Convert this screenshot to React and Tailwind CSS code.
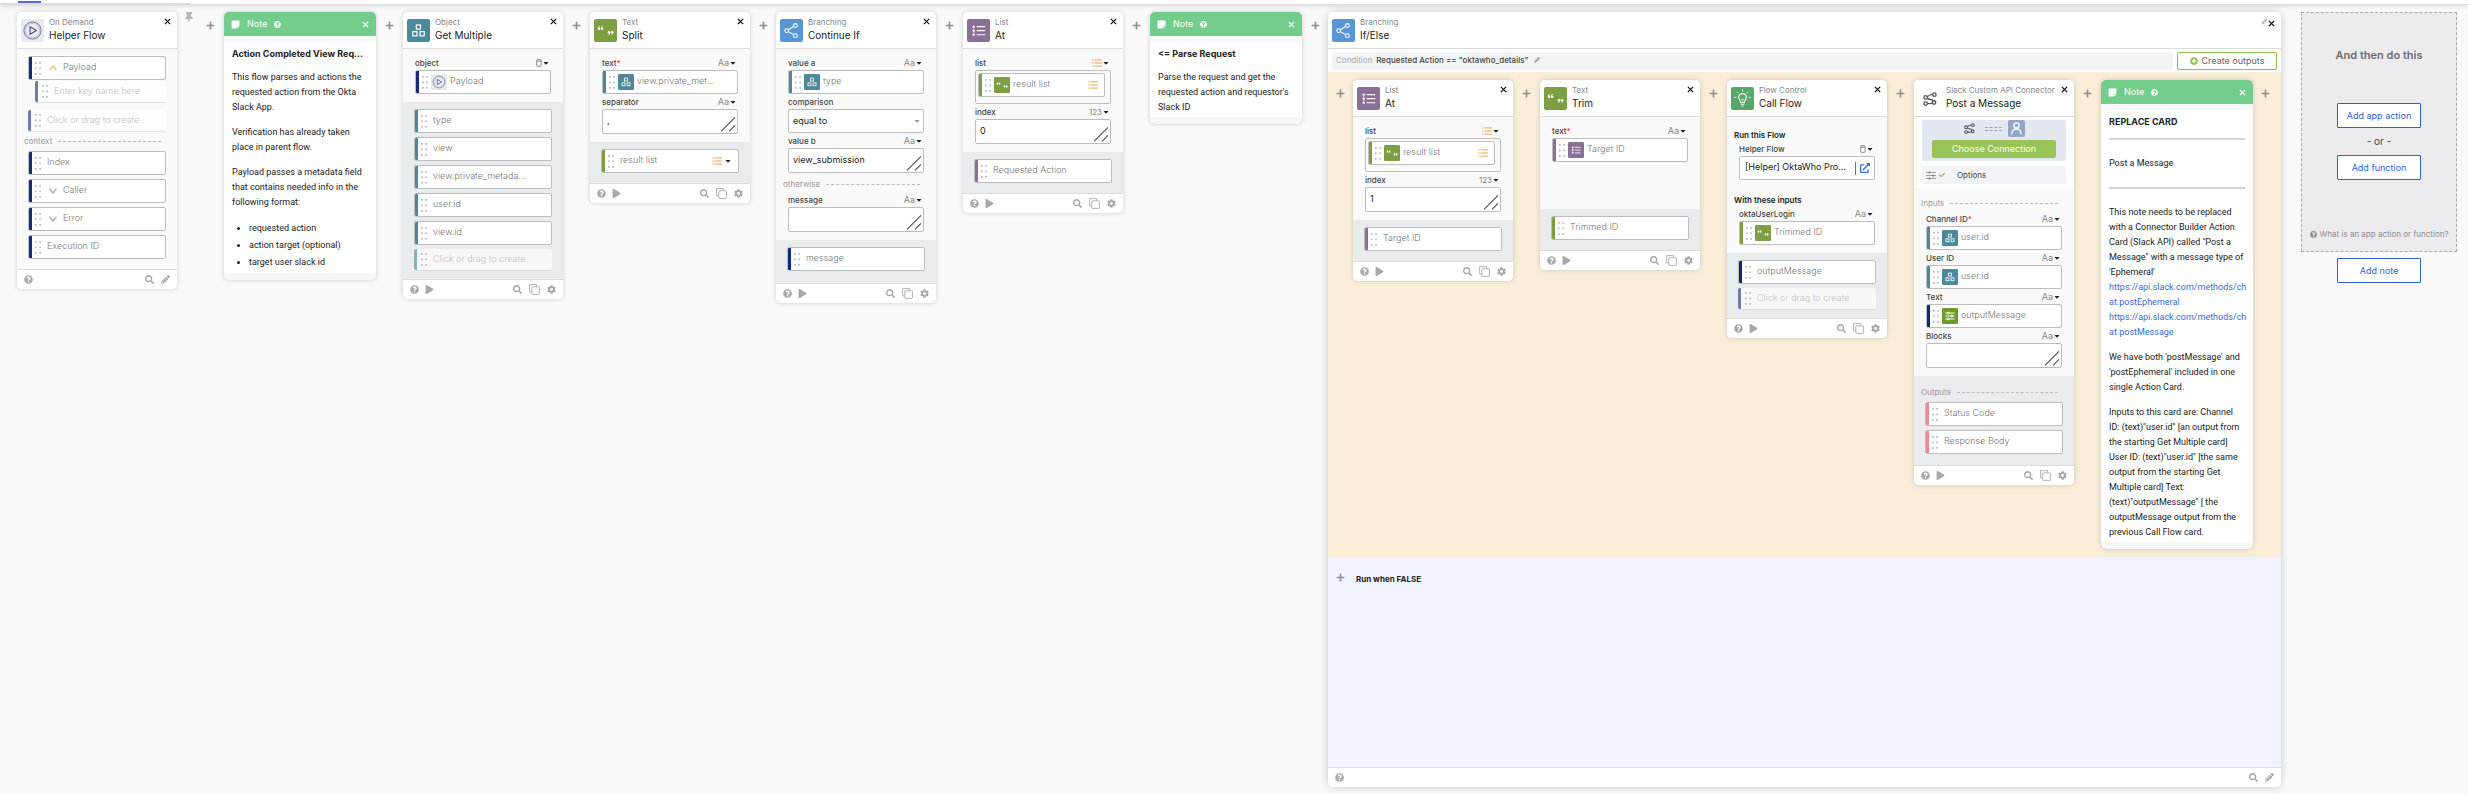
import React, { useId } from "react";
import {
  FaQuestionCircle,
  FaPlay,
  FaSearch,
  FaCog,
  FaPencilAlt,
  FaPlus,
  FaThumbtack,
  FaStickyNote,
  FaCompressAlt,
  FaCheck,
  FaPlusCircle,
  FaCaretDown,
  FaExternalLinkAlt,
} from "react-icons/fa";

/* ---------- icons ---------- */

const CloseIcon = ({ className }) => (
  <svg viewBox="0 0 8 8" className={className} fill="none" stroke="currentColor" strokeWidth="1.5">
    <path d="M1 1L7 7M7 1L1 7" />
  </svg>
);

const PlayRing = () => (
  <svg viewBox="0 0 24 24" className="size-full" fill="none" stroke="#5560a8">
    <rect width="24" height="24" rx="2" fill="#eaeaea" stroke="none" />
    <circle cx="12" cy="12" r="9" strokeWidth="0.9" />
    <circle cx="12" cy="12" r="7.6" strokeWidth="0.3" />
    <path d="M9.4 8L16 12L9.4 16Z" stroke="#3a4694" strokeWidth="1.1" strokeLinejoin="round" />
  </svg>
);

const ObjectIcon = () => (
  <svg viewBox="0 0 24 24" className="size-full" fill="none" stroke="#fff" strokeWidth="1.2">
    <rect width="24" height="24" rx="2" fill="#4b8a9b" stroke="none" />
    <rect x="9.7" y="6.2" width="4.4" height="4.4" />
    <rect x="6" y="13.2" width="4.4" height="4.4" />
    <rect x="13.6" y="13.2" width="4.4" height="4.4" />
  </svg>
);

const QuotesIcon = () => (
  <svg viewBox="0 0 24 24" className="size-full" fill="#fff">
    <rect width="24" height="24" rx="2" fill="#7c9f43" />
    <circle cx="5.3" cy="10.2" r="1.3" />
    <circle cx="8.5" cy="10.2" r="1.3" />
    <path d="M4.4 10.2Q4.4 7.8 6.2 7.4M7.6 10.2Q7.6 7.8 9.4 7.4" fill="none" stroke="#fff" strokeWidth="0.8" />
    <circle cx="15.7" cy="13.8" r="1.3" />
    <circle cx="18.9" cy="13.8" r="1.3" />
    <path d="M16.6 13.8Q16.6 16.2 14.8 16.6M19.8 13.8Q19.8 16.2 18 16.6" fill="none" stroke="#fff" strokeWidth="0.8" />
  </svg>
);

const BranchIcon = () => (
  <svg viewBox="0 0 24 24" className="size-full" fill="none" stroke="#fff" strokeWidth="1.1">
    <rect width="24" height="24" rx="2" fill="#5b96d4" stroke="none" />
    <circle cx="7" cy="12.2" r="2" />
    <circle cx="16" cy="6.8" r="2" />
    <circle cx="16" cy="17.4" r="2" />
    <path d="M8.8 11.2L14.2 7.9M8.8 13.2L14.2 16.3" />
  </svg>
);

const ListTile = () => (
  <svg viewBox="0 0 24 24" className="size-full" fill="none" stroke="#fff" strokeWidth="1.2">
    <rect width="24" height="24" rx="2" fill="#8a7095" stroke="none" />
    <path d="M10 8H19M10 12.2H19M10 16.4H19" />
    <path d="M7 7V17.4" strokeWidth="0.7" />
    <path d="M5.8 8H8.2M5.8 12.2H8.2M5.8 16.4H8.2" strokeWidth="1.7" />
  </svg>
);

const BulbIcon = () => (
  <svg viewBox="0 0 24 24" className="size-full" fill="none" stroke="#fff" strokeWidth="1.1" strokeLinecap="round">
    <rect width="24" height="24" rx="2" fill="#57a868" stroke="none" />
    <path d="M10.2 16.2C10.2 14.2 8 13.4 8 10.9A4 4 0 0 1 16 10.9C16 13.4 13.8 14.2 13.8 16.2Z" />
    <path d="M10.4 18H13.6M11.2 19.8H12.8M11 12.6L12 14L13 12.6" strokeWidth="0.9" />
    <path d="M12 3V4.4M6.4 5.2L7.3 6.2M17.6 5.2L16.7 6.2M3.8 10.8H5.2M18.8 10.8H20.2" strokeWidth="0.9" />
  </svg>
);

const SlidersTile = () => (
  <svg viewBox="0 0 24 24" className="size-full" fill="#6f9a2d" stroke="#fff" strokeWidth="1.5">
    <rect width="24" height="24" rx="2" stroke="none" />
    <path d="M5 7.6H19M5 12H19M5 16.4H19" />
    <circle cx="9.6" cy="7.6" r="1.4" />
    <circle cx="14.6" cy="12" r="1.4" />
    <circle cx="9.6" cy="16.4" r="1.4" />
  </svg>
);

const NodesIcon = ({ className }) => (
  <svg viewBox="0 0 16 16" className={className} fill="none" stroke="#555" strokeWidth="1.5">
    <circle cx="3" cy="6.2" r="2" />
    <circle cx="13" cy="3" r="2" />
    <circle cx="3" cy="13.2" r="2" />
    <circle cx="12.6" cy="12" r="2" />
    <path d="M4.8 5.4Q8 3 11 2.8M4.8 7Q7 8.6 9 8.6Q11 8.8 11.6 10.2M4.9 13Q8 13.6 10.8 12.8" />
  </svg>
);

const SlidersIcon = ({ className }) => (
  <svg viewBox="0 0 10 9" className={className} fill="#888" stroke="#888" strokeWidth="0.8">
    <path d="M0 1.5H10M0 4.5H10M0 7.5H10" />
    <path d="M3.4 0.3V2.7M7 3.3V5.7M3.4 6.3V8.7" strokeWidth="1.3" />
  </svg>
);

const PersonTile = ({ className }) => (
  <svg viewBox="0 0 17 17" className={className} fill="none" stroke="#fff" strokeWidth="1.3" strokeLinecap="round">
    <rect width="17" height="17" rx="2" fill="#93a6c8" stroke="none" />
    <circle cx="8.5" cy="5.4" r="2.6" />
    <path d="M3.8 14C4 10.6 6 9 8.5 9S13 10.6 13.2 14" />
  </svg>
);

const ListIcon = () => (
  <svg viewBox="0 0 10 8" className="h-2 w-2.5" fill="none" stroke="#f0a742" strokeWidth="1">
    <path d="M2.5 0.9H10M2.5 4H10M2.5 7.1H10M0.2 0.9H1.5M0.2 4H1.5M0.2 7.1H1.5" />
  </svg>
);

const RecordIcon = () => (
  <svg viewBox="0 0 6 8" className="h-2 w-1.5" fill="none" stroke="#777" strokeWidth="0.8">
    <rect x="0.7" y="0.6" width="4.4" height="6.8" rx="1" />
    <path d="M0.7 2.2H5.1" />
  </svg>
);

const CopyIcon = () => (
  <svg viewBox="0 0 11 11" className="size-[11px]" fill="none" stroke="#aaa" strokeWidth="0.9">
    <path d="M2.6 8H0.6V0.6H7.6V2.6" />
    <rect x="2.8" y="2.8" width="7.6" height="7.6" rx="0.6" />
  </svg>
);

const Grip = () => (
  <svg viewBox="0 0 6 13" className="h-[13px] w-1.5 shrink-0" fill="#bbb">
    <path d="M0 0h1.7v1.7H0zM4.2 0h1.7v1.7H4.2zM0 5.5h1.7v1.7H0zM4.2 5.5h1.7v1.7H4.2zM0 11h1.7v1.7H0zM4.2 11h1.7v1.7H4.2z" />
  </svg>
);

const Chevron = ({ up }) => (
  <svg
    viewBox="0 0 8 6"
    className={up ? "h-1.5 w-2 shrink-0 text-[#f3bd6c]" : "h-1.5 w-2 shrink-0 text-[#aaa]"}
    fill="none"
    stroke="currentColor"
    strokeWidth="1.4"
  >
    <path d={up ? "M0.6 5.4L4 1L7.4 5.4" : "M0.6 0.6L4 5L7.4 0.6"} />
  </svg>
);

const TILES = {
  play: PlayRing,
  object: ObjectIcon,
  quotes: QuotesIcon,
  branch: BranchIcon,
  list: ListTile,
  bulb: BulbIcon,
  sliders: SlidersTile,
};

const BARS = {
  navy: "bg-[#15297c]",
  navyFaint: "bg-[#6d7db0]",
  teal: "bg-[#4b8a9b]",
  tealFaint: "bg-[#86b1bb]",
  olive: "bg-[#7c9f43]",
  purple: "bg-[#8a7095]",
  red: "bg-[#e98d8d]",
};

/* ---------- building blocks ---------- */

function Pill({ id, bar, icon, chevron, children, end, listed }) {
  const Tile = TILES[icon];
  return (
    <button
      id={id}
      type="button"
      className="flex h-6 w-full items-center overflow-hidden rounded-[2px] border border-[#bdbdbd] bg-white text-left text-[9px] font-light text-[#777]"
    >
      <span className={`h-full w-[3px] shrink-0 ${BARS[bar]}`} />
      <span className="flex min-w-0 flex-1 items-center pl-[3px]">
        <Grip />
        {chevron && (
          <span className="ml-2 flex">
            <Chevron up={chevron === "up"} />
          </span>
        )}
        {Tile && (
          <span className="ml-[3px] size-4 shrink-0">
            <Tile />
          </span>
        )}
        <span className={Tile ? "ml-[3px] truncate pb-0.5" : "ml-1.5 truncate pb-0.5"}>{children}</span>
      </span>
      {end && (
        <span className="flex shrink-0 items-center gap-0.5 pr-1.5">
          <ListIcon />
          {!listed && <FaCaretDown className="size-2 text-[#222]" />}
        </span>
      )}
    </button>
  );
}

function Ghost({ bar, text, indent }) {
  return (
    <div className={indent ? "ml-[7px] flex h-[22px] items-center rounded-[2px] border-b border-[#ddd] bg-white/60" : "flex h-[22px] items-center rounded-[2px] border-b border-[#ddd] bg-white/60"}>
      <span className={`h-full w-[3px] shrink-0 rounded-l-[2px] ${BARS[bar]}`} />
      <span className="flex min-w-0 flex-1 items-center gap-1.5 pl-1">
        <Grip />
        <input
          aria-label={text}
          placeholder={text}
          className="min-w-0 flex-1 bg-transparent pb-0.5 text-[9px] font-light placeholder:text-[#c2c2c2] focus:outline-none"
        />
      </span>
    </div>
  );
}

const TYPES = {
  text: <span className="text-[9px] text-[#888]">Aa</span>,
  number: <span className="text-[8px] text-[#888]">123</span>,
  list: <ListIcon />,
  record: <RecordIcon />,
};

function Field({ label, type, required, children }) {
  const id = useId();
  return (
    <div>
      <div className="flex h-[15px] items-center justify-between pr-px">
        <label htmlFor={id} className="text-[8px] font-medium text-[#444]">
          {label}
          {required && <span className="text-[#e0403c]">*</span>}
        </label>
        {type && (
          <button type="button" aria-label={`${label} type`} className="flex items-center">
            {TYPES[type]}
            <FaCaretDown className="size-2 text-[#222]" />
          </button>
        )}
      </div>
      {children(id)}
    </div>
  );
}

function TextBox({ id, value = "" }) {
  return (
    <div className="relative h-[25px]">
      <textarea
        id={id}
        defaultValue={value}
        className="block h-full w-full resize-none overflow-hidden rounded-[2px] border border-[#bdbdbd] bg-white px-1 pt-1 text-[9px] leading-[14px] text-[#222]"
      />
      <svg viewBox="0 0 16 16" className="pointer-events-none absolute right-0.5 bottom-0.5 size-4" fill="none" stroke="#555" strokeWidth="1.2">
        <path d="M1 15.4L15 1.4M9 15.4L15 9.4" />
      </svg>
    </div>
  );
}

function Divider({ children }) {
  return (
    <div className="flex h-4 items-center gap-1.5 pr-4 pl-[7px] text-[8px] text-[#999]">
      <span>{children}</span>
      <span className="flex-1 border-t border-dashed border-[#bbb]" />
    </div>
  );
}

const Inputs = ({ children, className = "pt-1.5" }) => (
  <div className={`bg-[#f9f9f9] pb-2 ${className}`}>{children}</div>
);
const Fields = ({ children }) => <div className="px-3">{children}</div>;

const Outputs = ({ children, className = "pt-[7px] pb-2.5" }) => (
  <div className={`bg-[#eaebed] ${className}`}>{children}</div>
);
const Pills = ({ children }) => <div className="flex flex-col gap-1 px-[11px]">{children}</div>;

function IconButton({ label, children }) {
  return (
    <button type="button" aria-label={label} className="flex items-center justify-center">
      {children}
    </button>
  );
}

function Footer({ editable }) {
  return (
    <footer className="flex h-5 shrink-0 items-center justify-between rounded-b-[5px] border-t border-[#dcdcdc] bg-white px-[7px] text-[#a8a8a8]">
      <div className="flex items-center gap-1.5">
        <IconButton label="Help">
          <FaQuestionCircle className="size-[9px]" />
        </IconButton>
        {!editable && (
          <IconButton label="Run">
            <FaPlay className="size-[9px]" />
          </IconButton>
        )}
      </div>
      <div className="flex items-center gap-[7px]">
        <IconButton label="Search">
          <FaSearch className="size-[9px]" />
        </IconButton>
        {editable ? (
          <IconButton label="Edit">
            <FaPencilAlt className="size-[9px]" />
          </IconButton>
        ) : (
          <>
            <IconButton label="Duplicate">
              <CopyIcon />
            </IconButton>
            <IconButton label="Settings">
              <FaCog className="size-[9px]" />
            </IconButton>
          </>
        )}
      </div>
    </footer>
  );
}

function CardHeader({ icon, connector, kind, title, collapsible }) {
  const Tile = TILES[icon];
  return (
    <header className="flex h-[37px] shrink-0 items-start rounded-t-[5px] border-b border-[#dcdcdc] bg-white pt-1 pr-1.5 pl-1">
      {Tile ? (
        <span className="mt-[3px] size-[23px] shrink-0">
          <Tile />
        </span>
      ) : (
        <span className="flex h-[30px] w-6 shrink-0 items-center justify-center">
          <NodesIcon className="size-3.5" />
        </span>
      )}
      <div className={connector ? "ml-1 min-w-0 flex-1" : "ml-[5px] min-w-0 flex-1"}>
        <p className="text-[8px] leading-3 whitespace-nowrap text-[#888]">{kind}</p>
        <h2 className="text-[10px] leading-[14px] whitespace-nowrap text-[#222]">{title}</h2>
      </div>
      <div className="flex items-center pt-0.5">
        {collapsible && (
          <IconButton label="Collapse">
            <FaCompressAlt className="mb-1 size-[7px] text-[#999]" />
          </IconButton>
        )}
        <IconButton label={`Close ${title}`}>
          <CloseIcon className="size-[7px] text-[#111]" />
        </IconButton>
      </div>
    </header>
  );
}

function Card({ children, editable, ...head }) {
  return (
    <section className="w-[160px] shrink-0 rounded-[5px] bg-white shadow-[0_0_5px_rgba(0,0,0,0.18)]">
      <CardHeader {...head} />
      {children}
      <Footer editable={editable} />
    </section>
  );
}

function Note({ title, children }) {
  return (
    <section className="w-[152px] shrink-0 rounded-[5px] bg-[#f7f7f7] pb-[7px] shadow-[0_0_5px_rgba(0,0,0,0.18)]">
      <header className="flex h-6 items-center rounded-t-[5px] bg-[#72cc8b] px-[7px] text-white">
        <FaStickyNote className="size-[9px]" />
        <span className="ml-[7px] text-[9px]">Note</span>
        <FaQuestionCircle className="ml-[7px] size-[7px]" />
        <button type="button" aria-label="Close note" className="ml-auto">
          <CloseIcon className="size-[7px]" />
        </button>
      </header>
      <div className="mt-1.5 bg-white px-2 pt-1 pb-0.5 text-[#222]">
        <h3 className="text-[9px] leading-4 font-bold whitespace-nowrap">{title}</h3>
        <div className="flex flex-col gap-2.5 pt-2 font-[Roboto,sans-serif] text-[9px] leading-[15px] whitespace-pre">
          {children}
        </div>
      </div>
    </section>
  );
}

function Plus({ className = "w-[27px]" }) {
  return (
    <div className={`flex h-[27px] shrink-0 items-center justify-center ${className}`}>
      <button type="button" aria-label="Add step here">
        <FaPlus className="size-[9px] text-[#8f8f8f]" />
      </button>
    </div>
  );
}

const OutlineButton = ({ children }) => (
  <button type="button" className="h-[25px] w-[84px] rounded-[1px] border border-[#2f62d9] bg-white text-[9px] text-[#2f62d9]">
    {children}
  </button>
);

/* ---------- cards ---------- */

const ListAt = ({ index, output }) => (
  <Card icon="list" kind="List" title="At">
    <Inputs>
      <Fields>
        <Field label="list" type="list">
          {(id) => (
            <div className="h-[34px] rounded-[2px] border border-[#bdbdbd] bg-[#f9f9f9] pt-0.5 pr-[5px] pl-0.5">
              <Pill id={id} bar="olive" icon="quotes" end listed>
                result list
              </Pill>
            </div>
          )}
        </Field>
        <Field label="index" type="number">
          {(id) => <TextBox id={id} value={index} />}
        </Field>
      </Fields>
    </Inputs>
    <Outputs>
      <Pills>
        <Pill bar="purple">{output}</Pill>
      </Pills>
    </Outputs>
  </Card>
);

const HelperFlow = () => (
  <Card icon="play" kind="On Demand" title="Helper Flow" editable>
    <div className="bg-[#f9f9f9] pt-[7px] pb-2.5">
      <div className="px-[11px]">
        <Pill bar="navy" chevron="up">
          Payload
        </Pill>
        <div className="pt-px">
          <Ghost bar="navyFaint" text="Enter key name here" indent />
        </div>
        <div className="pt-[7px]">
          <Ghost bar="navyFaint" text="Click or drag to create" />
        </div>
      </div>
      <div className="pt-px pb-0.5">
        <Divider>context</Divider>
      </div>
      <Pills>
        <Pill bar="navy">Index</Pill>
        <Pill bar="navy" chevron="down">
          Caller
        </Pill>
        <Pill bar="navy" chevron="down">
          Error
        </Pill>
        <Pill bar="navy">Execution ID</Pill>
      </Pills>
    </div>
  </Card>
);

const GetMultiple = () => (
  <Card icon="object" kind="Object" title="Get Multiple">
    <Inputs>
      <Fields>
        <Field label="object" type="record">
          {(id) => (
            <Pill id={id} bar="navy" icon="play">
              Payload
            </Pill>
          )}
        </Field>
      </Fields>
    </Inputs>
    <Outputs className="pt-[7px] pb-2">
      <Pills>
        {["type", "view", "view.private_metada...", "user.id", "view.id"].map((name) => (
          <Pill key={name} bar="teal">
            {name}
          </Pill>
        ))}
        <Ghost bar="tealFaint" text="Click or drag to create" />
      </Pills>
    </Outputs>
  </Card>
);

const Split = () => (
  <Card icon="quotes" kind="Text" title="Split">
    <Inputs>
      <Fields>
        <Field label="text" type="text" required>
          {(id) => (
            <Pill id={id} bar="teal" icon="object">
              view.private_met...
            </Pill>
          )}
        </Field>
        <Field label="separator" type="text">
          {(id) => <TextBox id={id} value="," />}
        </Field>
      </Fields>
    </Inputs>
    <Outputs>
      <Pills>
        <Pill bar="olive" end>
          result list
        </Pill>
      </Pills>
    </Outputs>
  </Card>
);

const ContinueIf = () => (
  <Card icon="branch" kind="Branching" title="Continue If">
    <Inputs>
      <Fields>
        <Field label="value a" type="text">
          {(id) => (
            <Pill id={id} bar="teal" icon="object">
              type
            </Pill>
          )}
        </Field>
        <Field label="comparison">
          {(id) => (
            <div className="relative h-6">
              <select
                id={id}
                className="block h-full w-full appearance-none rounded-[2px] border border-[#bdbdbd] bg-white px-1 text-[9px] leading-[14px] text-[#222]"
              >
                <option>equal to</option>
              </select>
              <FaCaretDown className="pointer-events-none absolute top-2 right-[3px] size-2 text-[#999]" />
            </div>
          )}
        </Field>
        <Field label="value b" type="text">
          {(id) => <TextBox id={id} value="view_submission" />}
        </Field>
      </Fields>
      <div className="pt-[3px]">
        <Divider>otherwise</Divider>
      </div>
      <Fields>
        <Field label="message" type="text">
          {(id) => <TextBox id={id} />}
        </Field>
      </Fields>
    </Inputs>
    <Outputs className="pt-[7px] pb-3">
      <Pills>
        <Pill bar="navy">message</Pill>
      </Pills>
    </Outputs>
  </Card>
);

const Trim = () => (
  <Card icon="quotes" kind="Text" title="Trim">
    <Inputs className="min-h-[92px] pt-1.5">
      <Fields>
        <Field label="text" type="text" required>
          {(id) => (
            <Pill id={id} bar="purple" icon="list">
              Target ID
            </Pill>
          )}
        </Field>
      </Fields>
    </Inputs>
    <Outputs>
      <Pills>
        <Pill bar="olive">Trimmed ID</Pill>
      </Pills>
    </Outputs>
  </Card>
);

const CallFlow = () => (
  <Card icon="bulb" kind="Flow Control" title="Call Flow">
    <Inputs>
      <h3 className="px-[7px] pt-1.5 text-[8px] leading-3 font-semibold text-[#222]">Run this Flow</h3>
      <Fields>
        <Field label="Helper Flow" type="record">
          {(id) => (
            <div className="flex h-6 items-center rounded-[2px] border border-[#bdbdbd] bg-white pr-1 pl-[5px]">
              <button id={id} type="button" className="min-w-0 flex-1 pb-0.5 text-left text-[9px] whitespace-nowrap text-[#222]">
                [Helper] OktaWho Pro...
              </button>
              <a href="#helper-flow" aria-label="Open helper flow" className="flex h-[13px] items-center border-l border-[#777] pl-1">
                <FaExternalLinkAlt className="size-2.5 text-[#3b6fe0]" />
              </a>
            </div>
          )}
        </Field>
      </Fields>
      <h3 className="px-[7px] pt-3.5 text-[8px] leading-3 font-semibold text-[#222]">With these inputs</h3>
      <Fields>
        <Field label="oktaUserLogin" type="text">
          {(id) => (
            <Pill id={id} bar="olive" icon="quotes">
              Trimmed ID
            </Pill>
          )}
        </Field>
      </Fields>
    </Inputs>
    <Outputs className="pt-[7px] pb-2">
      <Pills>
        <Pill bar="navy">outputMessage</Pill>
        <Ghost bar="navyFaint" text="Click or drag to create" />
      </Pills>
    </Outputs>
  </Card>
);

const PostMessage = () => (
  <Card connector kind="Slack Custom API Connector" title="Post a Message">
    <div className="flex flex-col gap-[5px] px-2 pt-[3px] pb-[3px]">
      <div className="rounded-[2px] bg-[#e4e7ef] px-2.5 pb-[3px]">
        <div className="flex h-5 items-start justify-center gap-2.5">
          <NodesIcon className="mt-[3px] size-[11px]" />
          <span className="mt-[7px] h-1 w-[17px] border-y border-dashed border-[#93a6c8]" />
          <PersonTile className="-ml-1 size-[17px]" />
        </div>
        <button type="button" className="block h-[18px] w-full rounded-[2px] bg-[#97c455] text-[9px] text-white">
          Choose Connection
        </button>
      </div>
      <button type="button" className="flex h-[18px] items-center rounded-[2px] bg-[#f2f3f7] px-1 text-[8px] text-[#444]">
        <SlidersIcon className="h-[9px] w-2.5" />
        <FaCheck className="ml-[3px] size-1.5 text-[#8bc34a]" />
        <span className="ml-3">Options</span>
      </button>
    </div>
    <Inputs className="pt-2">
      <Divider>Inputs</Divider>
      <Fields>
        <Field label="Channel ID" type="text" required>
          {(id) => (
            <Pill id={id} bar="teal" icon="object">
              user.id
            </Pill>
          )}
        </Field>
        <Field label="User ID" type="text">
          {(id) => (
            <Pill id={id} bar="teal" icon="object">
              user.id
            </Pill>
          )}
        </Field>
        <Field label="Text" type="text">
          {(id) => (
            <Pill id={id} bar="navy" icon="sliders">
              outputMessage
            </Pill>
          )}
        </Field>
        <Field label="Blocks" type="text">
          {(id) => <TextBox id={id} />}
        </Field>
      </Fields>
    </Inputs>
    <Outputs className="pt-2 pb-[11px]">
      <div className="pb-0.5">
        <Divider>Outputs</Divider>
      </div>
      <Pills>
        <Pill bar="red">Status Code</Pill>
        <Pill bar="red">Response Body</Pill>
      </Pills>
    </Outputs>
  </Card>
);

const link = "text-[#3b6ad6]";

const IfElse = () => (
  <section className="flex min-w-0 flex-1 flex-col rounded-[5px] bg-white shadow-[0_0_8px_rgba(0,0,0,0.2)]">
    <CardHeader icon="branch" kind="Branching" title="If/Else" collapsible />
    <div className="flex gap-1 px-1 pt-[3px] pb-0.5">
      <div className="flex h-[18px] flex-1 items-center rounded-[2px] bg-[#f2f3f7] px-1 pb-0.5 text-[8px]">
        <span className="text-[#aaa]">Condition</span>
        <span className="ml-1 font-medium text-[#444]">Requested Action == "oktawho_details"</span>
        <button type="button" aria-label="Edit condition" className="ml-1.5">
          <FaPencilAlt className="size-1.5 text-[#999]" />
        </button>
      </div>
      <button
        type="button"
        className="flex h-[18px] w-[100px] items-center justify-center gap-1 rounded-[2px] border border-[#8bc34a] bg-white text-[9px] text-[#666]"
      >
        <FaPlusCircle className="size-2 text-[#8bc34a]" />
        Create outputs
      </button>
    </div>
    <div className="flex items-start bg-[#faedd8] py-2">
      <Plus className="w-[25px]" />
      <ListAt index="1" output="Target ID" />
      <Plus />
      <Trim />
      <Plus />
      <CallFlow />
      <Plus />
      <PostMessage />
      <Plus />
      <Note title="REPLACE CARD">
        <hr className="border-t-2 border-[#d0d5dc]" />
        <p className="py-1.5">Post a Message</p>
        <hr className="border-t-2 border-[#d0d5dc]" />
        <p className="pt-1.5">
          {"This note needs to be replaced\nwith a Connector Builder Action\nCard (Slack API) called \"Post a\nMessage\" with a message type of\n'Ephemeral'\n"}
          <a className={link} href="https://api.slack.com/methods/chat.postEphemeral">
            {"https://api.slack.com/methods/ch\nat.postEphemeral"}
          </a>
          {"\n"}
          <a className={link} href="https://api.slack.com/methods/chat.postMessage">
            {"https://api.slack.com/methods/ch\nat.postMessage"}
          </a>
        </p>
        <p>{"We have both 'postMessage' and\n'postEphemeral' included in one\nsingle Action Card."}</p>
        <p>
          {
            "Inputs to this card are: Channel\nID: (text)\"user.id\" [an output from\nthe starting Get Multiple card]\nUser ID: (text)\"user.id\" [the same\noutput from the starting Get\nMultiple card] Text:\n(text)\"outputMessage\" [ the\noutputMessage output from the\nprevious Call Flow card."
          }
        </p>
      </Note>
      <Plus className="w-[25px]" />
    </div>
    <div className="flex flex-1 items-start bg-[#f1f4fe] pt-[7px]">
      <Plus className="w-[25px]" />
      <h3 className="pl-[3px] text-[8px] leading-[30px] font-bold text-[#222]">Run when FALSE</h3>
    </div>
    <Footer editable />
  </section>
);

export default function App() {
  return (
    <div className="flex min-h-screen flex-col bg-[#f9f9f9] font-[Inter,sans-serif]">
      <div className="flex h-[5px] shrink-0 items-start border-b border-[#dcdcdc] bg-white shadow-[0_1px_4px_rgba(0,0,0,0.15)]">
        <div className="flex h-1 w-[191px] items-end border-b border-[#dcdcdc] pl-[18px]">
          <span className="h-0.5 w-[23px] bg-[#5468e0]" />
        </div>
      </div>
      <main className="flex flex-1 items-start pt-[7px] pr-[11px] pb-[7px] pl-[17px]">
        <HelperFlow />
        <div className="flex w-[20px] shrink-0 justify-end pr-[3px]">
          <button type="button" aria-label="Pin card">
            <FaThumbtack className="size-2.5 text-[#b5b5b5]" />
          </button>
        </div>
        <Plus />
        <Note title="Action Completed View Req...">
          <p>{"This flow parses and actions the\nrequested action from the Okta\nSlack App."}</p>
          <p>{"Verification has already taken\nplace in parent flow."}</p>
          <p>{"Payload passes a metadata field\nthat contains needed info in the\nfollowing format:"}</p>
          <ul className="list-disc pl-[17px] leading-[17px]">
            <li>requested action</li>
            <li>action target (optional)</li>
            <li>target user slack id</li>
          </ul>
        </Note>
        <Plus />
        <GetMultiple />
        <Plus />
        <Split />
        <Plus className="w-[26px]" />
        <ContinueIf />
        <Plus />
        <ListAt index="0" output="Requested Action" />
        <Plus />
        <Note title="<= Parse Request">
          <p>{"Parse the request and get the\nrequested action and requestor's\nSlack ID"}</p>
        </Note>
        <Plus className="w-[26px]" />
        <div className="flex min-w-0 flex-1 self-stretch">
          <IfElse />
        </div>
        <aside className="ml-5 flex w-[156px] shrink-0 flex-col items-center gap-1.5">
          <div className="flex h-[240px] w-full flex-col items-center border border-dashed border-[#aaa] bg-[#ebebed]">
            <h2 className="pt-[34px] text-[11px] leading-4 font-semibold text-[#6b6b70]">And then do this</h2>
            <div className="flex flex-col items-center pt-10">
              <OutlineButton>Add app action</OutlineButton>
              <span className="text-[10px] leading-[27px] text-[#444]">- or -</span>
              <OutlineButton>Add function</OutlineButton>
            </div>
            <a href="#help" className="mt-auto flex items-center gap-[3px] pb-2.5 text-[8px] leading-[14px] whitespace-nowrap text-[#8d8d92]">
              <FaQuestionCircle className="size-[7px]" />
              What is an app action or function?
            </a>
          </div>
          <OutlineButton>Add note</OutlineButton>
        </aside>
      </main>
    </div>
  );
}
